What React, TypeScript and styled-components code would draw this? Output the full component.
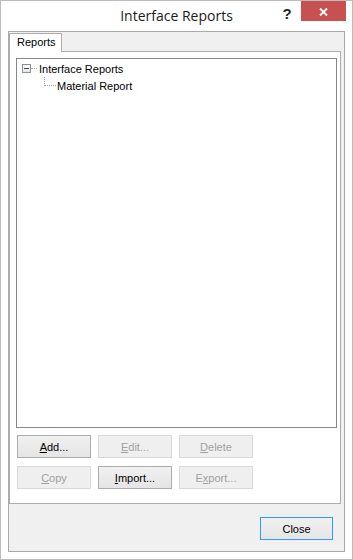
import React from "react";
import styled, { createGlobalStyle } from "styled-components";

const GlobalStyle = createGlobalStyle`
  html, body { margin: 0; padding: 0; background: #ffffff; }
  body { font-family: "Liberation Sans", Arial, sans-serif; }
  #root { width: 353px; height: 560px; }
`;

const Window = styled.div`
  box-sizing: border-box;
  width: 353px;
  height: 560px;
  border: 1px solid #bcbcbc;
  background: #ffffff;
  display: flex;
  flex-direction: column;
`;

const TitleBar = styled.div`
  height: 30px;
  flex: none;
  display: grid;
  grid-template-columns: 1fr auto 1fr;
  align-items: start;
`;

const Title = styled.div`
  grid-column: 2;
  font-family: "Open Sans", "Noto Sans", sans-serif;
  font-size: 14px;
  line-height: 20px;
  padding-top: 5px;
  color: #1b1b1b;
  white-space: nowrap;
`;

const Controls = styled.div`
  grid-column: 3;
  justify-self: end;
  display: flex;
  align-items: flex-start;
  margin-right: 6px;
`;

const HelpGlyph = styled.span`
  width: 16px;
  margin-right: 6px;
  margin-top: 3px;
  text-align: center;
  font: bold 15px/20px "Liberation Sans", Arial, sans-serif;
  color: #262626;
`;

const CloseCaption = styled.div`
  width: 45px;
  height: 20px;
  background: #c75050;
  display: flex;
  align-items: center;
  justify-content: center;
  padding-top: 1px;
  box-sizing: border-box;
`;

const Client = styled.div`
  box-sizing: border-box;
  height: 521px;
  margin: 0 7px;
  border: 1px solid #a9a9a9;
  background: #f0f0f0;
  display: flex;
  flex-direction: column;
`;

const TabControl = styled.div`
  padding-top: 1px;
  display: flex;
  flex-direction: column;
`;

const TabStrip = styled.div`
  display: flex;
  height: 18px;
  align-items: flex-start;
`;

const Tab = styled.div`
  position: relative;
  z-index: 1;
  box-sizing: border-box;
  height: 19px;
  width: 53px;
  border: 1px solid #acacac;
  border-bottom: none;
  background: #ffffff;
  padding-left: 7px;
  font-size: 11px;
  line-height: 17px;
  color: #000000;
`;

const TabPage = styled.div`
  box-sizing: border-box;
  width: 332px;
  height: 453px;
  border: 1px solid #acacac;
  background: #ffffff;
  padding: 6px 3px 14px 6px;
  display: flex;
  flex-direction: column;
`;

const Tree = styled.div`
  box-sizing: border-box;
  width: 321px;
  height: 370px;
  border: 1px solid #828790;
  background: #ffffff;
  padding-top: 1px;
  display: flex;
  flex-direction: column;
`;

const TreeRow = styled.div`
  display: flex;
  align-items: center;
  height: 17px;
  font-size: 11px;
  color: #000000;
`;

const Expander = styled.span`
  box-sizing: border-box;
  width: 9px;
  height: 9px;
  margin-left: 5px;
  border: 1px solid #919191;
  background: linear-gradient(#ffffff, #e4e4e4);
  display: flex;
  align-items: center;
  justify-content: center;
`;

const Minus = styled.span`
  width: 5px;
  height: 1px;
  background: #2a4a86;
`;

const HConnector = styled.span`
  width: 6px;
  height: 0;
  border-top: 1px dotted #a0a0a0;
`;

const Elbow = styled.span`
  box-sizing: border-box;
  align-self: flex-start;
  margin-left: 27px;
  width: 12px;
  height: 9px;
  border-left: 1px dotted #a0a0a0;
  border-bottom: 1px dotted #a0a0a0;
`;

const TreeLabel = styled.span<{ $gap: number }>`
  margin-left: ${(p) => p.$gap}px;
  white-space: nowrap;
`;

const ButtonGrid = styled.div`
  margin-top: 7px;
  margin-left: 1px;
  display: grid;
  grid-template-columns: repeat(3, 74px);
  column-gap: 7px;
  row-gap: 8px;
`;

const Button = styled.button<{ $width?: number; $default?: boolean }>`
  box-sizing: border-box;
  width: ${(p) => p.$width ?? 74}px;
  height: 23px;
  margin: 0;
  padding: 0;
  font: 11px "Liberation Sans", Arial, sans-serif;
  color: #000000;
  border: 1px solid ${(p) => (p.$default ? "#3399ff" : "#acacac")};
  border-radius: 0;
  background: linear-gradient(#f0f0f0, #e5e5e5);
  &:disabled {
    color: #a0a0a0;
    border-color: #d9d9d9;
    background: #efefef;
  }
  u {
    text-decoration-thickness: 1px;
    text-underline-offset: 1px;
  }
`;

const BottomPanel = styled.div`
  flex: 1;
  display: flex;
  justify-content: flex-end;
  align-items: flex-start;
  padding: 13px 11px 0 0;
`;

export default function App() {
  return (
    <>
      <GlobalStyle />
      <Window>
        <TitleBar>
          <Title>Interface Reports</Title>
          <Controls>
            <HelpGlyph>?</HelpGlyph>
            <CloseCaption>
              <svg width="9" height="8" viewBox="0 0 9 8">
                <path
                  d="M1 0.5 L8 7.5 M8 0.5 L1 7.5"
                  stroke="#ffffff"
                  strokeWidth="1.9"
                  fill="none"
                />
              </svg>
            </CloseCaption>
          </Controls>
        </TitleBar>
        <Client>
          <TabControl>
            <TabStrip>
              <Tab>Reports</Tab>
            </TabStrip>
            <TabPage>
              <Tree>
                <TreeRow>
                  <Expander>
                    <Minus />
                  </Expander>
                  <HConnector />
                  <TreeLabel $gap={2}>Interface Reports</TreeLabel>
                </TreeRow>
                <TreeRow>
                  <Elbow />
                  <TreeLabel $gap={1}>Material Report</TreeLabel>
                </TreeRow>
              </Tree>
              <ButtonGrid>
                <Button>
                  <u>A</u>dd...
                </Button>
                <Button disabled>
                  <u>E</u>dit...
                </Button>
                <Button disabled>
                  <u>D</u>elete
                </Button>
                <Button disabled>
                  <u>C</u>opy
                </Button>
                <Button>
                  <u>I</u>mport...
                </Button>
                <Button disabled>
                  E<u>x</u>port...
                </Button>
              </ButtonGrid>
            </TabPage>
          </TabControl>
          <BottomPanel>
            <Button $width={73} $default>
              Close
            </Button>
          </BottomPanel>
        </Client>
      </Window>
    </>
  );
}
